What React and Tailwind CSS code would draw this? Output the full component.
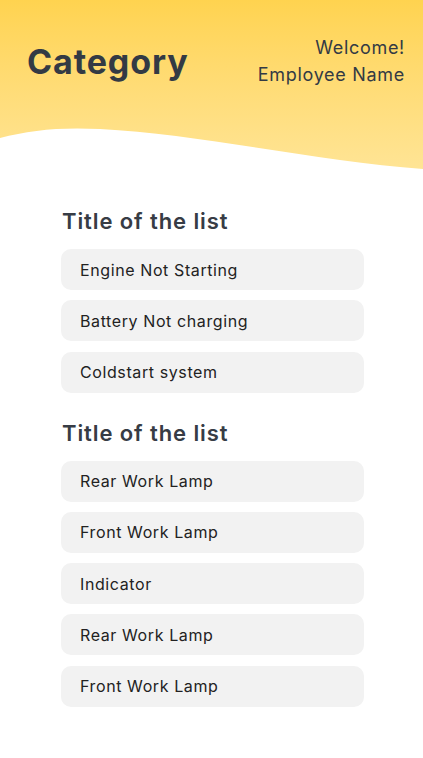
const sections = [
  {
    title: 'Title of the list',
    items: ['Engine Not Starting', 'Battery Not charging', 'Coldstart system'],
  },
  {
    title: 'Title of the list',
    items: ['Rear Work Lamp', 'Front Work Lamp', 'Indicator', 'Rear Work Lamp', 'Front Work Lamp'],
  },
];

const Header = () => (
  <div className="relative h-[176px] bg-linear-to-b from-[#ffd34f] to-[#ffe597]">
    <div className="flex items-start justify-between pl-[27px] pr-[18px] pt-[34px]">
      <h1 className="mt-[6px] text-[34px] font-bold leading-[44px] tracking-[0.9px] text-[#333a44]">
        Category
      </h1>
      <div className="text-right text-[18px] leading-[27px] tracking-[0.7px] text-[#333a44]">
        <div>Welcome!</div>
        <div>Employee Name</div>
      </div>
    </div>
    <svg
      className="absolute bottom-0 left-0 w-full"
      viewBox="0 0 423 50"
      height="50"
      preserveAspectRatio="none"
    >
      <path d="M0 12 C 30 4 60 1 100 3 C 200 8 320 36 423 43 L423 50 L0 50 Z" fill="#ffffff" />
    </svg>
  </div>
);

const ListSection = ({ section }) => (
  <div>
    <h2 className="pl-[1px] text-[22px] font-semibold leading-[28px] tracking-[0.9px] text-[#373c45]">
      {section.title}
    </h2>
    <ul className="mt-[14px] flex flex-col gap-[10.25px]">
      {section.items.map((item, i) => (
        <li
          key={i}
          className="flex h-[41px] items-center rounded-[10px] bg-[#f2f2f2] pl-[19px] text-[16px] tracking-[0.6px] text-[#222222]"
        >
          {item}
        </li>
      ))}
    </ul>
  </div>
);

export default function App() {
  return (
    <div
      className="min-h-[758px] w-full bg-white"
      style={{ fontFamily: 'Inter, "Noto Sans", sans-serif' }}
    >
      <Header />
      <div className="flex flex-col gap-[26px] pl-[61px] pr-[59px] pt-[31px]">
        {sections.map((section, i) => (
          <ListSection key={i} section={section} />
        ))}
      </div>
    </div>
  );
}
